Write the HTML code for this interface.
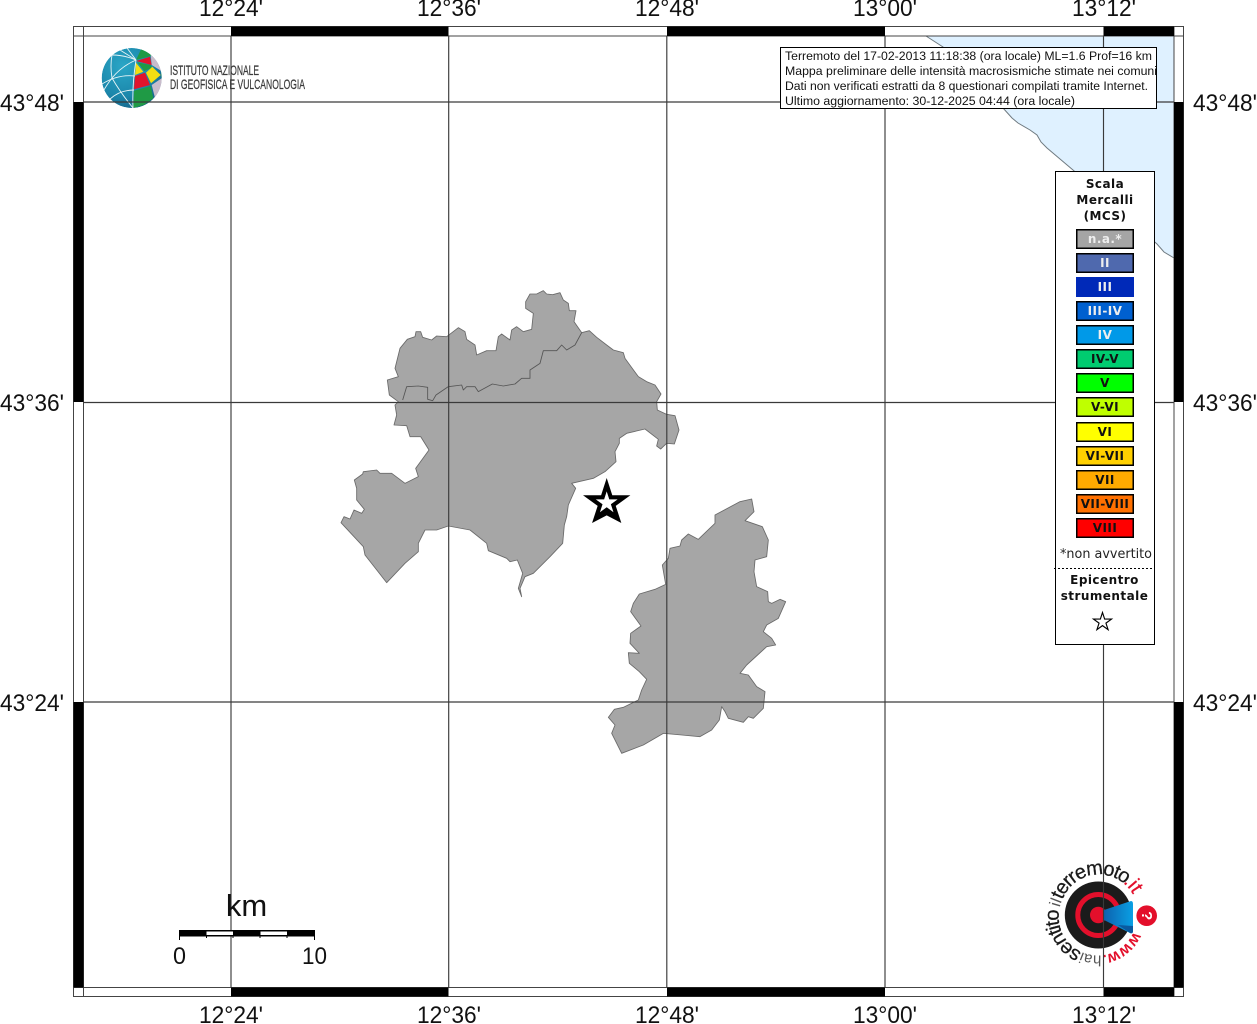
<!DOCTYPE html>
<html><head><meta charset="utf-8"><style>
html,body{margin:0;padding:0;background:#fff;width:1257px;height:1024px;overflow:hidden}
svg{display:block;filter:blur(.3px)}
text{font-family:"Liberation Sans",sans-serif}
.ax{font-size:24.500px;fill:#111;text-anchor:middle}
.info{font-size:12.200px;fill:#111}
.leg{font-family:"DejaVu Sans",sans-serif;font-size:12px;font-weight:bold;text-anchor:middle;letter-spacing:.45px;fill:#111}
.sw{stroke:#000;stroke-width:1.5}
.ha{font-size:20px;letter-spacing:-1.2px;fill:#1a1a1a;stroke:#1a1a1a;stroke-width:.25}
</style></head><body>
<svg width="1257" height="1024" viewBox="0 0 1257 1024" xmlns="http://www.w3.org/2000/svg">
<defs>
<radialGradient id="gb" cx=".35" cy=".3" r=".85"><stop offset="0" stop-color="#2aa6c6"/><stop offset=".6" stop-color="#1b86aa"/><stop offset="1" stop-color="#14587e"/></radialGradient>
<linearGradient id="mg" x1="0" y1="0" x2="1" y2="0"><stop offset="0" stop-color="#0d62ae"/><stop offset="1" stop-color="#0aa0e4"/></linearGradient>
<clipPath id="gc"><circle cx="131.700" cy="78" r="30"/></clipPath>
<clipPath id="ic"><rect x="781" y="48" width="375.500" height="60"/></clipPath>
<path id="ring" d="M1133.600 931.500A39 39 0 1 1 1063 898.500A39 39 0 1 1 1133.600 931.500"/>
</defs>

<!-- sea -->
<path d="M926 36L943 47L1003 108L1012 118L1018 123L1030 130L1037 135L1041 142L1047 148L1060 159L1073 170L1157 244L1164 252L1174 258V36Z" fill="#dff1ff"/>
<path d="M926 36L943 47L1003 108L1012 118L1018 123L1030 130L1037 135L1041 142L1047 148L1060 159L1073 170L1157 244L1164 252L1174 258" fill="none" stroke="#6f7a80" stroke-width="1"/>

<!-- regions -->
<g transform="translate(330 280) scale(.33333)" fill="#a6a6a6" stroke="#6a6a6a" stroke-width="2.600" stroke-linejoin="round">
<path d="M600 42L620 42L640 32L650 42L668 44L690 38L700 60L715 70L718 92L738 92L732 125L755 158L778 152L800 172L830 195L850 210L880 218L885 235L925 290L950 305L975 315L993 342L980 365L982 390L1010 403L1035 407L1047 450L1033 492L1010 490L992 507L980 498L985 478L945 447L890 460L868 475L868 490L855 515L858 545L825 575L790 595L725 610L737 625L715 675L710 710L703 735L698 790L660 830L610 880L585 890L570 925L575 950L565 925L578 880L562 840L540 845L530 835L475 812L470 790L420 750L355 738L320 750L285 750L265 790L265 815L225 850L170 908L105 825L100 800L33 728L42 710L60 717L72 690L95 700L103 688L80 660L80 625L73 600L98 582L100 575L140 570L150 580L185 580L225 610L265 590L257 565L297 510L272 470L240 470L230 437L192 435L200 405L195 375L205 365L178 345L172 300L205 290L195 265L210 205L232 178L255 170L258 155L272 155L278 172L305 180L320 168L350 170L385 143L405 155L410 178L435 195L440 225L470 212L498 212L505 170L515 162L540 180L545 150L560 140L580 155L605 148L610 100L587 85L587 65Z"/>
<path d="M755 158L735 195L710 210L695 195L680 212L640 212L630 250L600 270L600 295L575 295L555 312L520 318L487 312L445 335L435 320L410 320L400 330L395 315L355 320L318 345L308 362L293 358L293 322L265 318L230 320L218 360" fill="none" stroke="#555"/>
</g>
<g transform="translate(600 490) scale(.33333)" fill="#a6a6a6" stroke="#6a6a6a" stroke-width="2.600" stroke-linejoin="round">
<path d="M455 27L420 35L345 75L345 100L295 148L265 132L245 150L240 168L210 175L205 205L187 225L197 283L165 298L118 312L100 340L92 365L123 408L92 430L90 460L118 490L85 488L88 520L118 545L140 568L125 600L115 630L70 652L43 658L25 682L45 705L35 730L65 790L130 765L190 730L245 735L300 740L335 720L358 690L365 650L375 665L385 685L430 697L445 680L460 685L490 655L495 605L470 590L445 555L420 550L440 525L500 470L527 465L515 445L490 425L500 405L535 385L557 335L540 328L515 340L505 335L503 305L470 290L462 245L465 210L500 200L505 150L487 110L435 92L462 65Z"/>
</g>

<!-- INGV logo -->
<g clip-path="url(#gc)">
<circle cx="131.700" cy="78" r="30" fill="url(#gb)"/>
<path d="M136 60L141.700 48L150 52L151 56Z" fill="#1f9a45"/>
<path d="M136 61L150 56.700L151.700 65Z" fill="#e0142c"/>
<path d="M150.700 55L158.300 61L163 72L151.700 65Z" fill="#c9bccb"/>
<path d="M136 62.700L143.300 71.700L135 75Z" fill="#f2de12"/>
<path d="M137.300 62.300L150.700 65L151.700 68L144.300 71Z" fill="#1f9a45"/>
<path d="M152.300 66.700L160.700 75L151 83.300L146 72.700Z" fill="#f2de12"/>
<path d="M135 76L145 72.700L150 85L134 89.300Z" fill="#e0142c"/>
<path d="M151.700 85L162 78L162 90L155 98Z" fill="#c9bccb"/>
<path d="M134 90.700L150.700 86L153.300 98.300L144 105L133.300 108Z" fill="#1f9a45"/>
<path d="M161 71L163 72L163 79L161.500 78Z" fill="#1f9a45"/>
<g fill="none" stroke="#e8f4f6" stroke-width=".9">
<path d="M136 60L127 48"/>
<path d="M136 60Q122 66 112 78Q106 86 104 90"/>
<path d="M136 60Q132 85 133 108"/>
<path d="M112 55Q124 55 136 60"/>
<path d="M112 55Q110 66 112 78Q120 92 133 108"/>
<path d="M102 84Q118 74 135 76"/>
<path d="M110 99Q120 90 134 90"/>
<path d="M136 60L120 50"/>
</g>
</g>
<text x="170" y="75" font-size="14" fill="#3a3a3a" stroke="#3a3a3a" stroke-width=".25" textLength="89" lengthAdjust="spacingAndGlyphs">ISTITUTO NAZIONALE</text>
<text x="170" y="89" font-size="14" fill="#3a3a3a" stroke="#3a3a3a" stroke-width=".25" textLength="135" lengthAdjust="spacingAndGlyphs">DI GEOFISICA E VULCANOLOGIA</text>

<!-- haisentito logo -->
<circle cx="1098.300" cy="915" r="33.500" fill="#1b1b1b"/>
<circle cx="1098.300" cy="915" r="20.500" fill="none" stroke="#e30f2b" stroke-width="5"/>
<circle cx="1098.300" cy="915" r="8.300" fill="#e30f2b"/>
<path d="M1104 910L1131 901Q1133 901 1133 904L1133 931Q1133 934 1130 933L1104 920Z" fill="url(#mg)"/>
<path d="M1118 925L1133 926L1133 932Q1132 934 1130 933Z" fill="#0a5aa0"/>
<circle cx="1146.700" cy="915.700" r="10.300" fill="#e30f2b"/>
<text x="1146.700" y="920.500" font-size="15" font-weight="bold" fill="#fff" text-anchor="middle" transform="rotate(90 1146.700 915.700)">?</text>
<text font-size="16" font-weight="bold" fill="#e30f2b"><textPath href="#ring" startOffset="0">www.</textPath></text>
<text font-size="15" fill="#555"><textPath href="#ring" startOffset="42">hai</textPath></text>
<text class="ha"><textPath href="#ring" startOffset="62">sentito</textPath></text>
<text font-size="16" fill="#555"><textPath href="#ring" startOffset="116">il</textPath></text>
<text class="ha"><textPath href="#ring" startOffset="124">terremoto</textPath></text>
<text class="ha" style="fill:#e30f2b;stroke:#e30f2b;letter-spacing:0"><textPath href="#ring" startOffset="197">.it</textPath></text>

<!-- grid -->
<g stroke="#3a3a3a" stroke-width="1.150" fill="none">
<path d="M231 36V987M448.700 36V987M666.800 36V987M885 36V987M1103.500 36V987"/>
<path d="M83.500 102H1174M83.500 402.500H1174M83.500 702H1174"/>
</g>

<!-- frame -->
<rect x="73.500" y="26.500" width="1110" height="970" fill="none" stroke="#444"/>
<g fill="#fff" stroke="#444" stroke-width="1"><rect x="73.500" y="26.500" width="10" height="9.500"/><rect x="1174" y="26.500" width="9.500" height="9.500"/><rect x="73.500" y="987.500" width="10" height="9"/><rect x="1174" y="987.500" width="9.500" height="9"/></g>
<path d="M83.500 36H1174V987.500H83.500Z" fill="none" stroke="#444"/>
<g fill="#000">
<rect x="231" y="26.500" width="217.500" height="9.500"/><rect x="667" y="26.500" width="218" height="9.500"/><rect x="1103.500" y="26.500" width="70.500" height="9.500"/>
<rect x="231" y="987.500" width="217.500" height="9"/><rect x="667" y="987.500" width="218" height="9"/><rect x="1103.500" y="987.500" width="70.500" height="9"/>
<rect x="73.500" y="102" width="10" height="300"/><rect x="73.500" y="702" width="10" height="285.500"/>
<rect x="1174" y="102" width="9.500" height="300"/><rect x="1174" y="702" width="9.500" height="285.500"/>
</g>

<!-- axis labels -->
<text class="ax" x="231" y="16" textLength="64" lengthAdjust="spacingAndGlyphs">12°24'</text><text class="ax" x="449" y="16" textLength="64" lengthAdjust="spacingAndGlyphs">12°36'</text><text class="ax" x="667" y="16" textLength="64" lengthAdjust="spacingAndGlyphs">12°48'</text><text class="ax" x="885" y="16" textLength="64" lengthAdjust="spacingAndGlyphs">13°00'</text><text class="ax" x="1104" y="16" textLength="64" lengthAdjust="spacingAndGlyphs">13°12'</text>
<text class="ax" x="231" y="1023" textLength="64" lengthAdjust="spacingAndGlyphs">12°24'</text><text class="ax" x="449" y="1023" textLength="64" lengthAdjust="spacingAndGlyphs">12°36'</text><text class="ax" x="667" y="1023" textLength="64" lengthAdjust="spacingAndGlyphs">12°48'</text><text class="ax" x="885" y="1023" textLength="64" lengthAdjust="spacingAndGlyphs">13°00'</text><text class="ax" x="1104" y="1023" textLength="64" lengthAdjust="spacingAndGlyphs">13°12'</text>
<text class="ax" x="32" y="111" textLength="64" lengthAdjust="spacingAndGlyphs">43°48'</text><text class="ax" x="32" y="411" textLength="64" lengthAdjust="spacingAndGlyphs">43°36'</text><text class="ax" x="32" y="711" textLength="64" lengthAdjust="spacingAndGlyphs">43°24'</text>
<text class="ax" x="1225" y="111" textLength="64" lengthAdjust="spacingAndGlyphs">43°48'</text><text class="ax" x="1225" y="411" textLength="64" lengthAdjust="spacingAndGlyphs">43°36'</text><text class="ax" x="1225" y="711" textLength="64" lengthAdjust="spacingAndGlyphs">43°24'</text>

<!-- epicentre star -->
<g transform="translate(606.700 502.900)">
<polygon transform="scale(24.900)" fill="#000" points="0,-1 .2245,-.309 .951,-.309 .363,.118 .588,.809 0,.5 -.588,.809 -.363,.118 -.951,-.309 -.2245,-.309"/>
<polygon transform="scale(11.500)" fill="#fff" points="0,-1 .2245,-.309 .951,-.309 .363,.118 .588,.809 0,.382 -.588,.809 -.363,.118 -.951,-.309 -.2245,-.309"/>
</g>

<!-- scale bar -->
<g>
<rect x="179" y="930" width="136" height="6.500" fill="#000"/>
<rect x="206.500" y="931.500" width="26.500" height="3.500" fill="#fff"/>
<rect x="260.500" y="931.500" width="26.500" height="3.500" fill="#fff"/>
<path d="M179.500 930V940M314.500 930V940M206.500 936V938M233 936V938M260 936V938M287 936V938" stroke="#000" stroke-width="1"/>
<text x="246.500" y="916" font-size="31" fill="#111" text-anchor="middle">km</text>
<text x="179.500" y="964" font-size="24.500" fill="#111" text-anchor="middle" textLength="13" lengthAdjust="spacingAndGlyphs">0</text>
<text x="314.500" y="964" font-size="24.500" fill="#111" text-anchor="middle" textLength="25" lengthAdjust="spacingAndGlyphs">10</text>
</g>

<!-- info box -->
<rect x="780.500" y="47.500" width="376" height="61" fill="#fff" stroke="#000"/>
<g clip-path="url(#ic)">
<text class="info" x="785" y="60" textLength="367" lengthAdjust="spacingAndGlyphs">Terremoto del 17-02-2013 11:18:38 (ora locale) ML=1.6 Prof=16 km</text>
<text class="info" x="785" y="75" textLength="372" lengthAdjust="spacingAndGlyphs">Mappa preliminare delle intensità macrosismiche stimate nei comuni</text>
<text class="info" x="785" y="90" textLength="363" lengthAdjust="spacingAndGlyphs">Dati non verificati estratti da 8 questionari compilati tramite Internet.</text>
<text class="info" x="785" y="105" textLength="290" lengthAdjust="spacingAndGlyphs">Ultimo aggiornamento: 30-12-2025 04:44 (ora locale)</text>
</g>

<!-- legend -->
<rect x="1055.500" y="171.500" width="99" height="473" fill="#fff" stroke="#000"/>
<text class="leg" x="1105" y="188">Scala</text>
<text class="leg" x="1105" y="204">Mercalli</text>
<text class="leg" x="1105" y="220">(MCS)</text>
<g>
<rect class="sw" x="1076.750" y="229.750" width="56.500" height="18.500" fill="#a5a5a5"/><text class="leg" x="1105" y="243" style="fill:#eee">n.a.*</text>
<rect class="sw" x="1076.750" y="253.750" width="56.500" height="18.500" fill="#4f69ae"/><text class="leg" x="1105" y="267" style="fill:#eee">II</text>
<rect x="1076" y="277" width="58" height="20" fill="#0029b8"/><text class="leg" x="1105" y="291" style="fill:#eee">III</text>
<rect class="sw" x="1076.750" y="301.750" width="56.500" height="18.500" fill="#0060d0"/><text class="leg" x="1105" y="315" style="fill:#eee">III-IV</text>
<rect class="sw" x="1076.750" y="325.750" width="56.500" height="18.500" fill="#0099e8"/><text class="leg" x="1105" y="339" style="fill:#eee">IV</text>
<rect class="sw" x="1076.750" y="349.750" width="56.500" height="18.500" fill="#00cc70"/><text class="leg" x="1105" y="363">IV-V</text>
<rect class="sw" x="1076.750" y="373.750" width="56.500" height="18.500" fill="#00ff00"/><text class="leg" x="1105" y="387">V</text>
<rect class="sw" x="1076.750" y="397.750" width="56.500" height="18.500" fill="#bfff00"/><text class="leg" x="1105" y="411">V-VI</text>
<rect class="sw" x="1076.750" y="422.750" width="56.500" height="18.500" fill="#ffff00"/><text class="leg" x="1105" y="436">VI</text>
<rect class="sw" x="1076.750" y="446.750" width="56.500" height="18.500" fill="#ffd000"/><text class="leg" x="1105" y="460">VI-VII</text>
<rect class="sw" x="1076.750" y="470.750" width="56.500" height="18.500" fill="#ffaa00"/><text class="leg" x="1105" y="484">VII</text>
<rect class="sw" x="1076.750" y="494.750" width="56.500" height="18.500" fill="#ff7000"/><text class="leg" x="1105" y="508">VII-VIII</text>
<rect class="sw" x="1076.750" y="518.750" width="56.500" height="18.500" fill="#ff0000"/><text class="leg" x="1105" y="532">VIII</text>
</g>
<text x="1106" y="558" font-size="13" style="font-family:'DejaVu Sans',sans-serif" fill="#222" text-anchor="middle" textLength="92" lengthAdjust="spacingAndGlyphs">*non avvertito</text>
<path d="M1054 568.500H1152" stroke="#000" stroke-dasharray="2 2" fill="none"/>
<text class="leg" x="1104.500" y="584">Epicentro</text>
<text class="leg" x="1104.500" y="600">strumentale</text>
<g transform="translate(1102.500 622)"><polygon transform="scale(9.500)" fill="#fff" stroke="#000" stroke-width=".12" points="0,-1 .2245,-.309 .951,-.309 .363,.118 .588,.809 0,.382 -.588,.809 -.363,.118 -.951,-.309 -.2245,-.309"/></g>
</svg>
</body></html>
